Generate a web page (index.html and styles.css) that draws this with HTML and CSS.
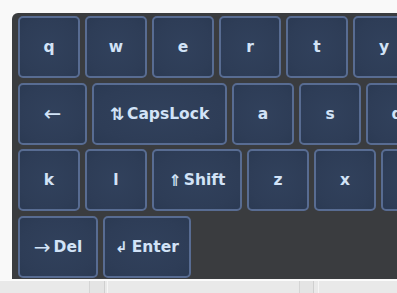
FILE: index.html
```html
<!DOCTYPE html>
<html>
<head>
<meta charset="utf-8">
<link rel="stylesheet" href="styles.css">
</head>
<body>
<div class="keyboard">
  <div class="row">
    <div class="key">q</div>
    <div class="key">w</div>
    <div class="key">e</div>
    <div class="key">r</div>
    <div class="key">t</div>
    <div class="key">y</div>
  </div>
  <div class="row">
    <div class="key key-back">←</div>
    <div class="key key-caps"><span class="sym sym-caps">⇅</span>CapsLock</div>
    <div class="key">a</div>
    <div class="key">s</div>
    <div class="key">d</div>
  </div>
  <div class="row">
    <div class="key">k</div>
    <div class="key">l</div>
    <div class="key key-shift"><span class="sym sym-shift">⇑</span>Shift</div>
    <div class="key">z</div>
    <div class="key">x</div>
    <div class="key"></div>
  </div>
  <div class="row">
    <div class="key key-del"><span class="sym sym-del">→</span>Del</div>
    <div class="key key-enter"><span class="sym sym-enter">↲</span>Enter</div>
  </div>
</div>
<div class="statusbar">
  <div class="cell cell-a"></div>
  <div class="cell cell-b"></div>
  <div class="cell cell-c"></div>
  <div class="cell cell-d"></div>
  <div class="cell cell-e"></div>
</div>
</body>
</html>
```

FILE: styles.css
```css
html, body {
  margin: 0;
  padding: 0;
  background: #f9f9f9;
  width: 397px;
  height: 293px;
  overflow: hidden;
}

.keyboard {
  margin: 13px 0 0 12px;
  width: 385px;
  height: 266px;
  box-sizing: border-box;
  padding: 3px 0 0 6px;
  background: #3a3c3f;
  border-radius: 6px 0 0 0;
  display: flex;
  flex-direction: column;
  gap: 4.7px;
  overflow: hidden;
}

.row {
  display: flex;
  gap: 5px;
  flex: none;
}

.key {
  flex: none;
  width: 62px;
  height: 62px;
  box-sizing: border-box;
  border: 2px solid #586c92;
  border-radius: 5px;
  background: radial-gradient(ellipse at center, #31415c 0%, #2e3d57 70%, #2b3a53 100%);
  color: #d2e3f7;
  font-family: "DejaVu Sans", Verdana, sans-serif;
  font-weight: bold;
  font-size: 15.5px;
  display: flex;
  align-items: center;
  justify-content: center;
  white-space: nowrap;
}

.key-back { width: 69px; font-weight: normal; font-size: 21px; }
.key-caps { width: 135px; }
.key-shift { width: 90px; }
.key-del { width: 80px; }
.key-enter { width: 88px; }

.sym {
  font-weight: bold;
  margin-right: 3px;
}

.sym-caps { font-size: 17px; margin-right: 3px; }
.sym-shift { font-size: 16px; margin-right: 2px; }
.sym-del { font-size: 20px; font-weight: normal; margin-right: 3px; }
.sym-enter { font-size: 15px; margin-right: 4px; }

.statusbar {
  height: 13px;
  margin-top: 1px;
  border-top: 1px solid #fbfbfb;
  background: #e9e9e9;
  display: flex;
}

.cell {
  height: 100%;
  box-sizing: border-box;
}

.cell-a { width: 90px; border-right: 1px solid #d4d4d4; }
.cell-b { width: 15px; border-right: 1px solid #cfcfcf; background: #e4e4e4; }
.cell-c { width: 193px; margin-left: 2px; border-left: 1px solid #f6f6f6; border-right: 1px solid #d4d4d4; }
.cell-d { width: 14px; border-right: 1px solid #cfcfcf; background: #e4e4e4; }
.cell-e { flex: 1; margin-left: 4px; border-left: 1px solid #f6f6f6; }
```
